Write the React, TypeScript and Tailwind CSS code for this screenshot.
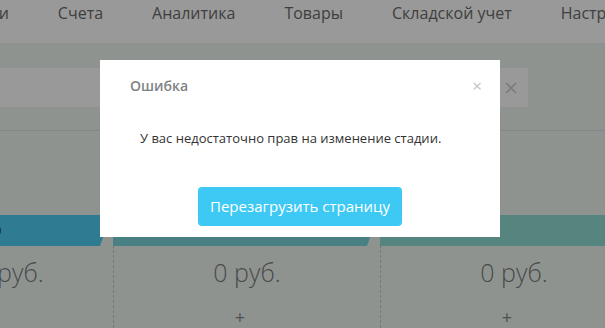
import React from 'react'

const nav = ['Сделки', 'Счета', 'Аналитика', 'Товары', 'Складской учет', 'Настройки']

const columns = [
  { w: 'w-[206px] ml-[-93px]', pad: 'pl-[43px]', color: 'bg-[#4ecdf3]', label: 'Новые (5)', plus: false },
  { w: 'w-[267px]', pad: 'pl-3', color: 'bg-[#7bd6dc]', label: 'В работе (0)', plus: true },
  { w: 'w-[267px]', pad: 'pl-3', color: 'bg-[#8fdcd2]', label: 'Переговоры (0)', plus: true },
]

export default function App() {
  return (
    <div className="relative w-[605px] h-[328px] overflow-hidden bg-[#eef5f1] font-['Open_Sans',sans-serif]">
      {/* Top navigation */}
      <div className="h-[43px] bg-white flex items-start pt-[1px] gap-[49px] ml-[-47px] text-[16px] text-[#6a6a6a] whitespace-nowrap">
        {nav.map((n) => (
          <span key={n}>{n}</span>
        ))}
      </div>

      {/* Search bar */}
      <div className="mt-[25px] w-[528px] h-[39px] bg-white flex items-center justify-end pr-[10px]">
        <svg width="14" height="14" viewBox="0 0 14 14" className="mt-[1px]">
          <path d="M2 2L12 12M12 2L2 12" stroke="#cdd1cf" strokeWidth="1.6" />
        </svg>
      </div>

      <div className="mt-[23px] h-px bg-[#dadfdd]" />

      {/* Columns */}
      <div className="mt-[84px] flex">
        {columns.map((c, i) => (
          <div
            key={i}
            className={`${c.w} shrink-0 h-[113px] flex flex-col ${i > 0 ? 'border-l border-dashed border-[#c4c9c7]' : ''}`}
          >
            <div
              className={`${c.color} ${c.pad} h-[31px] mr-[7px] ${i > 0 ? 'ml-[-1px]' : ''} rounded-tl-[3px] flex items-center text-[11px] text-[#1f3a44] whitespace-nowrap [clip-path:polygon(0_0,100%_0,100%_45%,calc(100%-6px)_100%,0_100%)]`}
            >
              {c.label}
            </div>
            <div className="text-center text-[25px] font-light text-[#7a7d7c] mt-[11px] leading-[30px]">
              0 руб.
            </div>
            {c.plus && (
              <div className="text-center pr-[14px] text-[18px] text-[#838786] mt-[20px] leading-[20px]">+</div>
            )}
          </div>
        ))}
      </div>

      {/* Backdrop */}
      <div className="absolute inset-0 bg-black/40" />

      {/* Modal */}
      <div className="absolute left-[100px] top-[60px] w-[400px] h-[177px] bg-white flex flex-col">
        <div className="flex items-center justify-between pl-[30px] pr-[18px] pt-[15px]">
          <span className="text-[14px] font-semibold text-[#7f8284]">Ошибка</span>
          <span className="text-[17px] leading-none text-[#c2c2c2]">×</span>
        </div>
        <div className="pl-[40px] pt-[33px] text-[13px] text-[#333]">
          У вас недостаточно прав на изменение стадии.
        </div>
        <div className="flex justify-center mt-[38px]">
          <button className="w-[204px] h-[39px] rounded-[4px] bg-[#3ec9f5] text-white text-[15px]">
            Перезагрузить страницу
          </button>
        </div>
      </div>
    </div>
  )
}
